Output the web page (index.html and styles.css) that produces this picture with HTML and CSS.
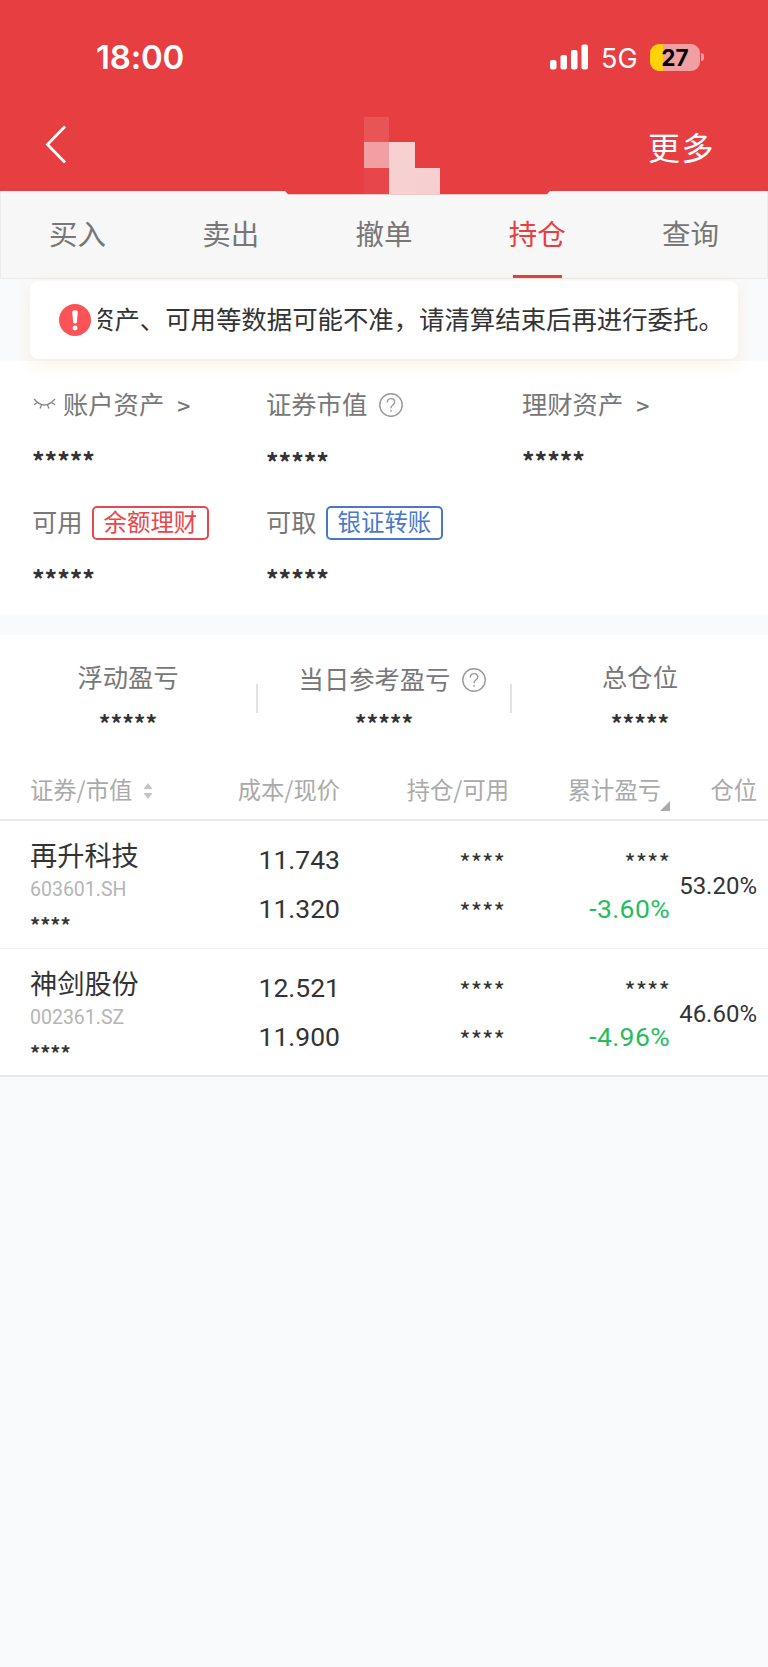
FILE: index.html
```
<!DOCTYPE html>
<html lang="zh-CN">
    <head>
        <meta charset="utf-8">
        <title>持仓</title>
        <link rel="stylesheet" href="styles.css">
    </head>
    <body>
        <header class="header">
            <div class="status">
                <span class="time">18:00</span>
                <svg class="signal" width="39" height="26" viewBox="0 0 39 26" fill="#fff">
                    <rect x="0" y="16" width="6.5" height="9.5" rx="2"/>
                    <rect x="10.5" y="11" width="6.5" height="14.5" rx="2"/>
                    <rect x="21" y="6" width="6.5" height="19.5" rx="2"/>
                    <rect x="31.5" y="0.5" width="6.5" height="25" rx="2"/>
                </svg>
                <span class="network">5G</span>
                <span class="battery">27</span>
                <span class="battery-tip"></span>
            </div>
            <div class="nav">
                <svg class="back" width="24" height="42" viewBox="0 0 24 42" fill="none" stroke="#fff" stroke-width="2.8">
                    <path d="M21 2.500 L3.500 20.500 L21 38.500"/>
                </svg>
                <svg class="mosaic" width="76" height="77" viewBox="0 0 76 77" shape-rendering="crispEdges">
                    <rect x="0" y="0" width="25" height="25" fill="#e95557"/>
                    <rect x="0" y="25" width="25" height="26" fill="#f09fa2"/>
                    <rect x="25" y="25" width="26" height="52" fill="#f7d1d2"/>
                    <rect x="0" y="51" width="25" height="26" fill="#e7464b"/>
                    <rect x="51" y="51" width="25" height="26" fill="#f6cfd0"/>
                </svg>
                <span class="more">更多</span>
            </div>
        </header>

        <nav class="tabs">
            <a class="tab">买入</a>
            <a class="tab">卖出</a>
            <a class="tab">撤单</a>
            <a class="tab active">持仓</a>
            <a class="tab">查询</a>
            <svg class="notch" width="266" height="4" viewBox="0 0 266 4"><path d="M0 0H265L262 3.300H3Z" fill="#e63e41"/></svg>
        </nav>

        <div class="notice-band">
            <div class="notice">
                <svg class="alert" width="32" height="32" viewBox="0 0 32 32">
                    <circle cx="16" cy="16" r="16" fill="#fc5356"/>
                    <path d="M13.2 8.5Q13.2 6.3 16 6.3T18.8 8.5L17.8 18.2Q17.6 19.6 16 19.6T14.2 18.2Z" fill="#fff"/>
                    <circle cx="16" cy="24" r="2.4" fill="#fff"/>
                </svg>
                <div class="marquee"><span class="marquee-text">资产、可用等数据可能不准，请清算结束后再进行委托。</span></div>
            </div>
        </div>

        <section class="assets">
            <div class="asset">
                <div class="label">
                    <svg class="eye" width="23" height="12" viewBox="0 0 23 12" fill="none" stroke="#888" stroke-width="1.3">
                        <path d="M1 1Q11.500 13 22 1M4.500 4.400L1 6.700M8.500 7L7 10.500M14.500 7L16 10.500M18.500 4.400L22 6.700"/>
                    </svg>
                    账户资产<span class="arrow">&gt;</span>
                </div>
                <div class="value">*****</div>
            </div>
            <div class="asset">
                <div class="label">证券市值<svg class="help" width="24" height="24" viewBox="0 0 24 24" fill="none" stroke="#999" stroke-width="1.4"><circle cx="12" cy="12" r="11.200"/><path d="M8.300 9.500Q8.300 5.600 12 5.600T15.700 9Q15.700 10.800 13.800 12Q12 13.200 12 15.200M12 17V18.800"/></svg></div>
                <div class="value lower">*****</div>
            </div>
            <div class="asset">
                <div class="label">理财资产<span class="arrow">&gt;</span></div>
                <div class="value">*****</div>
            </div>
            <div class="asset">
                <div class="label">可用<span class="badge red">余额理财</span></div>
                <div class="value">*****</div>
            </div>
            <div class="asset">
                <div class="label">可取<span class="badge blue">银证转账</span></div>
                <div class="value">*****</div>
            </div>
        </section>

        <section class="stats">
            <div class="stat">
                <div class="label">浮动盈亏</div>
                <div class="value">*****</div>
            </div>
            <div class="stat">
                <div class="label with-help">当日参考盈亏<svg class="help" width="24" height="24" viewBox="0 0 24 24" fill="none" stroke="#999" stroke-width="1.4"><circle cx="12" cy="12" r="11.200"/><path d="M8.300 9.500Q8.300 5.600 12 5.600T15.700 9Q15.700 10.800 13.800 12Q12 13.200 12 15.200M12 17V18.800"/></svg></div>
                <div class="value">*****</div>
            </div>
            <div class="stat">
                <div class="label">总仓位</div>
                <div class="value">*****</div>
            </div>
        </section>

        <section class="holdings">
            <div class="row head">
                <div class="sortable">证券/市值<svg class="sort" width="10" height="16" viewBox="0 0 10 16" fill="#c4c4c4"><path d="M5 0L9.500 6H0.500ZM5 16L9.500 10H0.500Z"/></svg></div>
                <div>成本/现价</div>
                <div>持仓/可用</div>
                <div class="profit">累计盈亏<svg class="corner" width="10" height="10" viewBox="0 0 10 10"><path d="M10 0V10H0Z" fill="#aaa"/></svg></div>
                <div>仓位</div>
            </div>
            <div class="row">
                <div class="stock">
                    <div class="name">再升科技</div>
                    <div class="code">603601.SH</div>
                    <div class="worth">****</div>
                </div>
                <div class="pair"><span>11.743</span><span>11.320</span></div>
                <div class="pair amount"><span class="mask">****</span><span class="mask">****</span></div>
                <div class="pair"><span class="mask">****</span><span class="down">-3.60%</span></div>
                <div class="ratio">53.20%</div>
            </div>
            <div class="row">
                <div class="stock">
                    <div class="name">神剑股份</div>
                    <div class="code">002361.SZ</div>
                    <div class="worth">****</div>
                </div>
                <div class="pair"><span>12.521</span><span>11.900</span></div>
                <div class="pair amount"><span class="mask">****</span><span class="mask">****</span></div>
                <div class="pair"><span class="mask">****</span><span class="down">-4.96%</span></div>
                <div class="ratio">46.60%</div>
            </div>
        </section>
    </body>
</html>
```
FILE: styles.css
```
* {
    box-sizing:border-box;
}

body {
    margin:0;
    min-height:1667px;
    background:#f8fafc;
    color:#333;
    font-family:"Noto Sans CJK SC", sans-serif;
    font-size:25.3px;
}

svg {
    display:block;
    flex:none;
}

.header {
    position:relative;
    z-index:1;
    height:191px;
    background:#e63e41;
    color:#fff;
}

.status {
    display:flex;
    align-items:center;
    height:114px;
    padding-left:96px;
    font-family:Inter, sans-serif;
}

.time {
    width:454px;
    font-size:33px;
    font-weight:600;
    letter-spacing:-0.2px;
}

.network {
    width:49px;
    margin-left:12px;
    padding-top:2px;
    font-size:27px;
}

.battery {
    width:50px;
    height:27px;
    border-radius:9px;
    background:linear-gradient(to right, #ffd20a 13px, #f09fa2 13px);
    color:#000;
    font-size:22.5px;
    font-weight:700;
    line-height:27px;
    text-align:center;
}

.battery-tip {
    width:3px;
    height:8px;
    margin-left:1px;
    border-radius:0 3px 3px 0;
    background:#f09fa2;
}

.nav {
    display:flex;
    height:77px;
    padding:3px 53px 0 44px;
}

.back {
    margin-top:7px;
}

.mosaic {
    margin-left:296px;
}

.more {
    margin-left:auto;
    font-size:32px;
    letter-spacing:1.500px;
    line-height:58px;
}

.tabs {
    position:relative;
    display:grid;
    grid-template-columns:repeat(5, 1fr);
    height:88px;
    border:1px solid #ebebeb;
    border-top:0;
    background:#f7f7f7;
}

.tab {
    display:flex;
    flex-direction:column;
    align-items:center;
    justify-content:space-between;
    color:#777;
    font-size:28.5px;
    line-height:84px;
}

.tab.active {
    color:#e63e41;
}

.tab.active::after {
    content:"";
    width:49px;
    height:3px;
    background:#e63e41;
}

/* header dips into the tab bar */
.notch {
    position:absolute;
    top:0;
    left:284px;
}

.notice-band {
    height:82px;
    padding:2px 30px;
}

.notice {
    position:relative;
    display:flex;
    align-items:center;
    height:78px;
    padding:0 12px 0 29px;
    border-radius:8px;
    background:#fff;
    box-shadow:0 5px 16px rgba(255, 160, 70, 0.16);
}

.marquee {
    margin:-4px 0 0 7px;
    overflow:hidden;
    font-size:25.4px;
    white-space:nowrap;
}

.marquee-text {
    margin-left:-9px;
}

.assets {
    display:grid;
    grid-template-columns:234px 256px 1fr;
    grid-auto-rows:118px;
    height:254px;
    padding:23px 0 0 32px;
    background:#fff;
}

.label {
    display:flex;
    align-items:center;
    height:38px;
    color:#777;
    white-space:nowrap;
}

.eye {
    margin:2px 7px 0 1px;
}

.arrow {
    margin:3px 0 0 13px;
    font-size:23px;
    font-weight:500;
}

.help {
    margin:4px 0 0 12px;
}

.badge {
    height:34px;
    margin:4px 0 0 9px;
    padding:0 10px;
    border:2px solid;
    border-radius:5px;
    font-size:23.4px;
    line-height:27px;
}

.badge.red {
    color:#e8474b;
}

.badge.blue {
    color:#4a78c8;
}

.asset .value {
    height:40px;
    margin-top:18px;
    font-size:24.8px;
    font-weight:700;
    line-height:40px;
}

.asset .value.lower {
    padding-top:1px;
}

.stats {
    display:grid;
    grid-template-columns:repeat(3, 1fr);
    height:125px;
    margin-top:20px;
    padding-top:22px;
    background:#fff;
}

.stat {
    display:flex;
    flex-direction:column;
    align-items:center;
}

.stat:not(:last-child) {
    background:linear-gradient(#e2e2e2, #e2e2e2) no-repeat right 27px / 2px 29px;
}

.stat:first-child {
    margin-right:-2px;
    padding-right:2px;
}

.stat .with-help {
    padding:3px 0 0 17px;
}

.stat .value {
    margin-top:8px;
    font-size:23px;
    font-weight:700;
    line-height:40px;
}

.row {
    display:grid;
    grid-template-columns:200px 140px 169px 161px 87px;
    height:128px;
    border-bottom:1px solid #efeff1;
    background:#fff;
    text-align:right;
}

.row:last-child {
    border-bottom:2px solid #e8e9ec;
}

.row.head {
    height:61px;
    border-bottom:2px solid #e8e8e8;
    color:#aaa;
    font-size:23.3px;
    line-height:59px;
}

.sortable {
    display:flex;
    align-items:center;
    padding-left:30px;
}

.sort {
    margin:2px 0 0 11px;
}

.profit {
    position:relative;
    padding-right:9px;
}

.corner {
    position:absolute;
    right:0;
    bottom:8px;
}

.stock {
    padding:13px 0 0 30px;
    text-align:left;
}

.name {
    font-size:27.2px;
    line-height:40px;
}

.code {
    padding-top:2px;
    color:#b5b5b5;
    font-family:Roboto, sans-serif;
    font-size:19.5px;
    line-height:28px;
}

.worth {
    font-size:20px;
    font-weight:700;
    line-height:41px;
}

.pair {
    display:flex;
    flex-direction:column;
    padding-top:14px;
    font-family:Roboto, sans-serif;
    font-size:26.5px;
    line-height:49px;
}

.pair.amount {
    padding-right:4px;
}

.mask {
    padding-top:6px;
    font-family:"Noto Sans CJK SC", sans-serif;
    font-size:24.5px;
    line-height:43px;
}

.down {
    color:#27bd5e;
    letter-spacing:0.4px;
}

.ratio {
    font-family:Roboto, sans-serif;
    font-size:24px;
    line-height:130px;
}
```
